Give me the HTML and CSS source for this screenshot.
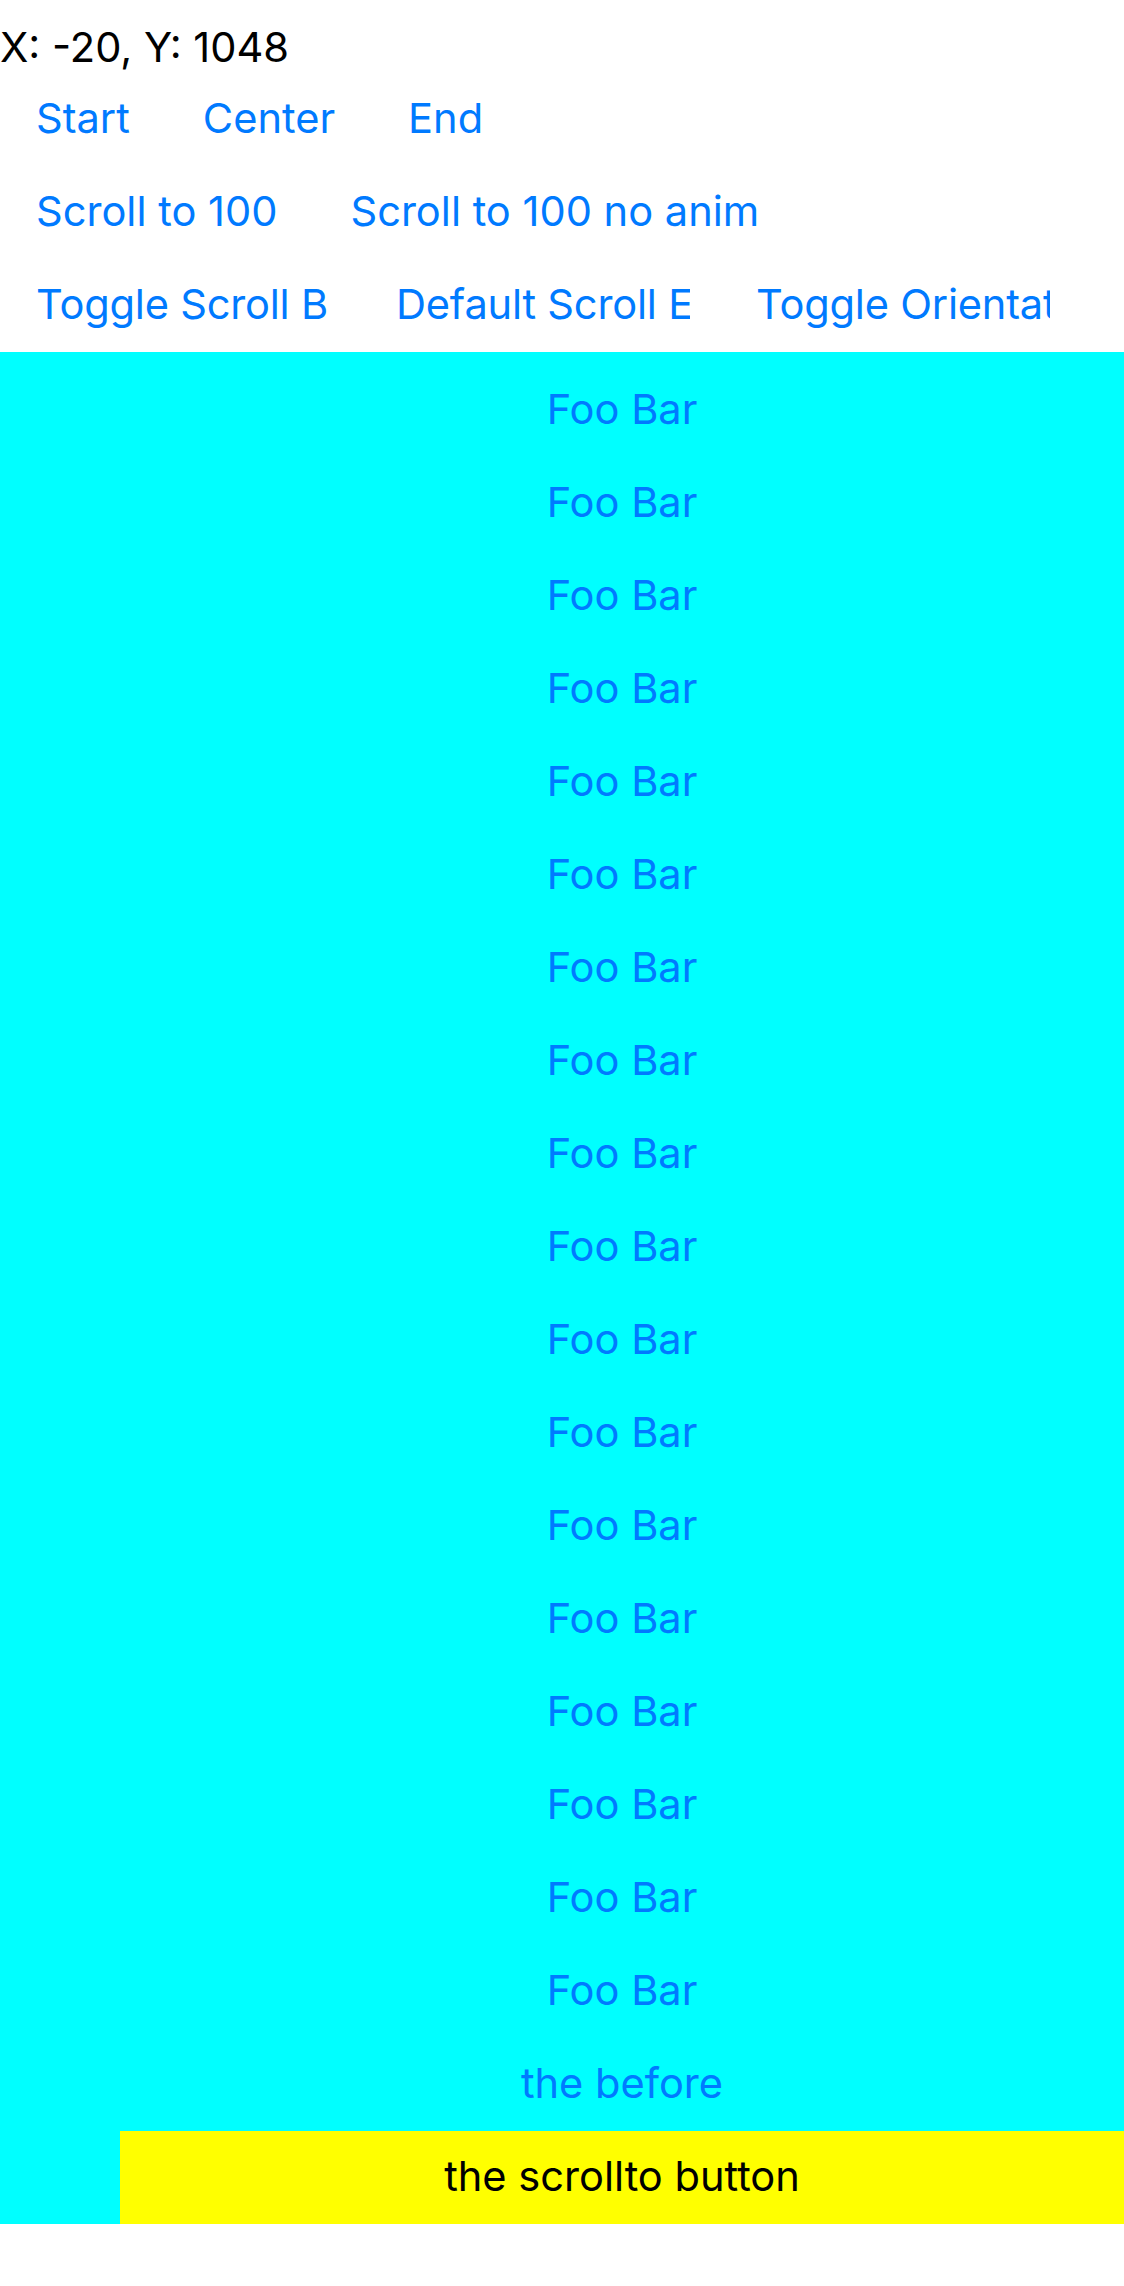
FILE: index.html
```html
<!DOCTYPE html>
<html>
<head>
<meta charset="utf-8">
<link rel="stylesheet" href="styles.css">
</head>
<body>
<div class="coords">X: -20, Y: 1048</div>
<div class="btn-row">
  <div class="btn">Start</div>
  <div class="btn">Center</div>
  <div class="btn">End</div>
</div>
<div class="btn-row">
  <div class="btn">Scroll to 100</div>
  <div class="btn">Scroll to 100 no anim</div>
</div>
<div class="btn-row btn-row-fixed">
  <div class="btn btn-fixed">Toggle Scroll B</div>
  <div class="btn btn-fixed">Default Scroll E</div>
  <div class="btn btn-fixed">Toggle Orientation</div>
</div>
<div class="scroller">
  <div class="content">
    <div class="item">Foo Bar</div>
    <div class="item">Foo Bar</div>
    <div class="item">Foo Bar</div>
    <div class="item">Foo Bar</div>
    <div class="item">Foo Bar</div>
    <div class="item">Foo Bar</div>
    <div class="item">Foo Bar</div>
    <div class="item">Foo Bar</div>
    <div class="item">Foo Bar</div>
    <div class="item">Foo Bar</div>
    <div class="item">Foo Bar</div>
    <div class="item">Foo Bar</div>
    <div class="item">Foo Bar</div>
    <div class="item">Foo Bar</div>
    <div class="item">Foo Bar</div>
    <div class="item">Foo Bar</div>
    <div class="item">Foo Bar</div>
    <div class="item">Foo Bar</div>
    <div class="item">the before</div>
    <div class="item item-target">the scrollto button</div>
  </div>
</div>
</body>
</html>
```
FILE: styles.css
```css
html, body {
  margin: 0;
  padding: 0;
  background: #ffffff;
}
body {
  font-family: Inter, "Liberation Sans", Arial, sans-serif;
  font-size: 41.6px;
  color: #000000;
}
.coords {
  padding-top: 22px;
  height: 51px;
  line-height: 50px;
  white-space: nowrap;
}
.btn-row {
  display: flex;
  align-items: center;
  height: 93px;
  box-sizing: border-box;
  padding-left: 36px;
  padding-bottom: 3px;
  gap: 73px;
  overflow: hidden;
}
.btn-row-fixed {
  gap: 66px;
}
.btn {
  color: #007aff;
  white-space: nowrap;
  flex: none;
  line-height: 50px;
}
.btn-fixed {
  width: 294px;
  overflow: hidden;
  letter-spacing: -0.2px;
}
.scroller {
  background: #00ffff;
  padding-top: 12px;
}
.content {
  margin-left: 120px;
}
.item {
  height: 93px;
  box-sizing: border-box;
  padding-bottom: 3px;
  display: flex;
  align-items: center;
  justify-content: center;
  color: #007aff;
  white-space: nowrap;
}
.item-target {
  background: #ffff00;
  color: #000000;
}
```
